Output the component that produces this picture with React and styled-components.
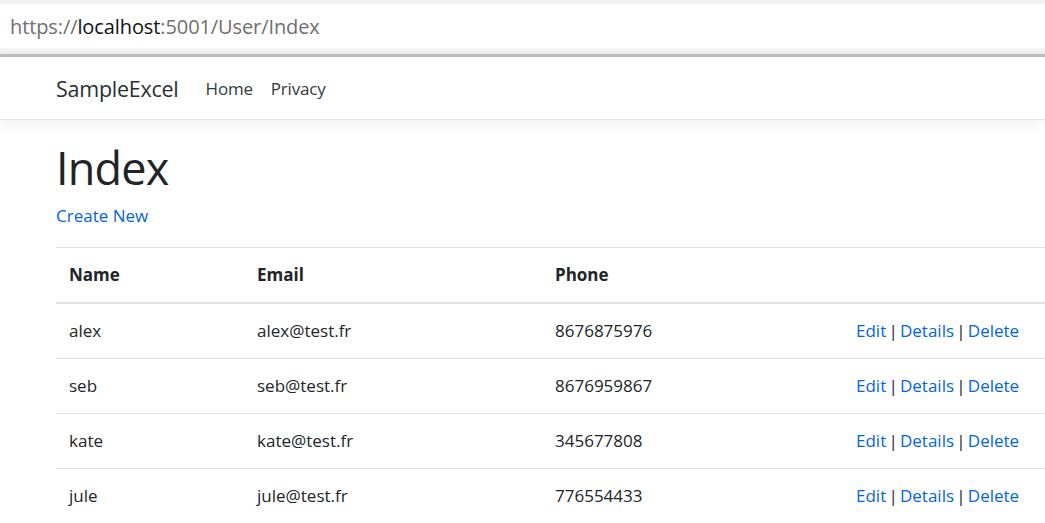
import React from "react";
import styled, { createGlobalStyle } from "styled-components";

const GlobalStyle = createGlobalStyle`
  html, body {
    margin: 0;
    padding: 0;
    background: #ffffff;
    overflow: hidden;
  }
  body {
    font-family: "Open Sans", "Noto Sans", Arial, sans-serif;
    color: #212529;
  }
`;

const Page = styled.div`
  width: 1045px;
  height: 523px;
  overflow: hidden;
  background: #ffffff;
`;

const Chrome = styled.div`
  background: #f1f1f1;
  padding-top: 4px;
`;

const UrlBar = styled.div`
  height: 44px;
  background: #ffffff;
  display: flex;
  align-items: center;
  padding-left: 10px;
  font-size: 20px;
  color: #6f6f6f;
  letter-spacing: -0.1px;
`;

const Host = styled.span`
  color: #111111;
`;

const ChromeStrip = styled.div`
  height: 6px;
  background: linear-gradient(#f5f5f5, #ebebeb);
`;

const ChromeLine = styled.div`
  height: 3px;
  background: #bdbdbd;
`;

const Navbar = styled.nav`
  height: 63px;
  box-sizing: border-box;
  border-bottom: 1px solid #e3e3e3;
  box-shadow: 0 4px 12px rgba(0, 0, 0, 0.05);
  display: flex;
  align-items: center;
  padding-left: 56px;
  position: relative;
`;

const Brand = styled.a`
  font-size: 21.5px;
  color: #2b2f33;
  text-decoration: none;
  margin-right: 18px;
  letter-spacing: -0.25px;
`;

const NavLink = styled.a`
  font-size: 17px;
  color: #343a40;
  text-decoration: none;
  padding: 0 9px;
  letter-spacing: -0.2px;
`;

const Main = styled.main`
  padding: 21px 0 0 56px;
`;

const Title = styled.h1`
  margin: 0 0 8px;
  font-size: 45px;
  line-height: 54px;
  font-weight: 500;
  color: #212529;
  letter-spacing: -0.8px;
`;

const Lead = styled.p`
  margin: 0 0 18px;
  font-size: 17px;
  line-height: 26px;
`;

const Link = styled.a`
  color: #0366d6;
  text-decoration: none;
`;

const Table = styled.table`
  border-collapse: collapse;
  table-layout: fixed;
  width: 1100px;
  font-size: 17px;
  line-height: 26px;
  color: #212529;
`;

const HeadCell = styled.th`
  text-align: left;
  font-weight: 700;
  padding: 14px 13px;
  border-top: 1px solid #dee2e6;
  border-bottom: 2px solid #dee2e6;
`;

const Cell = styled.td`
  padding: 14px 13px;
  border-top: 1px solid #dee2e6;
  white-space: nowrap;
`;

const ActionCell = styled(Cell)`
  word-spacing: -2.2px;
`;

const Sep = styled.span`
  color: #212529;
`;

const users = [
  { name: "alex", email: "alex@test.fr", phone: "8676875976" },
  { name: "seb", email: "seb@test.fr", phone: "8676959867" },
  { name: "kate", email: "kate@test.fr", phone: "345677808" },
  { name: "jule", email: "jule@test.fr", phone: "776554433" },
];

export default function App() {
  return (
    <Page>
      <GlobalStyle />
      <Chrome>
        <UrlBar>
          https://<Host>localhost</Host>:5001/User/Index
        </UrlBar>
        <ChromeStrip />
        <ChromeLine />
      </Chrome>
      <Navbar>
        <Brand href="#">SampleExcel</Brand>
        <NavLink href="#">Home</NavLink>
        <NavLink href="#">Privacy</NavLink>
      </Navbar>
      <Main>
        <Title>Index</Title>
        <Lead>
          <Link href="#">Create New</Link>
        </Lead>
        <Table>
          <colgroup>
            <col style={{ width: 188 }} />
            <col style={{ width: 298 }} />
            <col style={{ width: 301 }} />
            <col />
          </colgroup>
          <thead>
            <tr>
              <HeadCell>Name</HeadCell>
              <HeadCell>Email</HeadCell>
              <HeadCell>Phone</HeadCell>
              <HeadCell />
            </tr>
          </thead>
          <tbody>
            {users.map((u) => (
              <tr key={u.name}>
                <Cell>{u.name}</Cell>
                <Cell>{u.email}</Cell>
                <Cell>{u.phone}</Cell>
                <ActionCell>
                  <Link href="#">Edit</Link> <Sep>|</Sep>{" "}
                  <Link href="#">Details</Link> <Sep>|</Sep>{" "}
                  <Link href="#">Delete</Link>
                </ActionCell>
              </tr>
            ))}
          </tbody>
        </Table>
      </Main>
    </Page>
  );
}
